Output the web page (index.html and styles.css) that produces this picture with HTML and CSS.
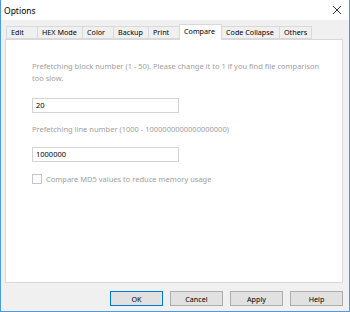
FILE: index.html
```html
<!DOCTYPE html>
<html lang="en">
<head>
    <meta charset="UTF-8">
    <title>Options</title>
    <link rel="stylesheet" href="styles.css">
</head>
<body>
<div class="window">
    <div class="titlebar">
        <span class="title">Options</span>
        <svg class="close" width="10" height="10" viewBox="0 0 10 10"><path d="M1 1L9 9M9 1L1 9" stroke="#333" stroke-width="1"/></svg>
    </div>

    <div class="client">
        <div class="tabs">
            <div class="tab w-edit">Edit</div>
            <div class="tab w-hex">HEX Mode</div>
            <div class="tab w-color">Color</div>
            <div class="tab w-backup">Backup</div>
            <div class="tab w-print">Print</div>
            <div class="tab w-compare active">Compare</div>
            <div class="tab w-collapse">Code Collapse</div>
            <div class="tab w-others">Others</div>
        </div>

        <div class="panel">
            <p class="label">Prefetching block number (1 - 50). Please change it to 1 if you find file comparison too slow.</p>
            <div class="field first">20</div>
            <p class="label">Prefetching line number (1000 - 1000000000000000000)</p>
            <div class="field second">1000000</div>
            <div class="check-row">
                <span class="checkbox"></span>
                <span class="label">Compare MD5 values to reduce memory usage</span>
            </div>
        </div>

        <div class="buttons">
            <button class="btn default">OK</button>
            <button class="btn">Cancel</button>
            <button class="btn">Apply</button>
            <button class="btn">Help</button>
        </div>
    </div>
</div>
</body>
</html>
```

FILE: styles.css
```css
/* Windows-Dialog im Kleinformat */
body { margin: 0; background: #ffffff; font-family: "Noto Sans", "DejaVu Sans", sans-serif; }
.window {
    width: 350px;
    height: 312px;
    box-sizing: border-box;
    border: 1px solid #4a9be2;
    border-top: none;
    background: #f0f0f0;
    display: flex;
    flex-direction: column;
}
.titlebar { height: 20px; background: #ffffff; display: flex; align-items: center; justify-content: space-between; padding: 0 7px 0 3px; }
.title { font-size: 8.5px; color: #000; }
.close { display: block; }

.client { flex: 1; display: flex; flex-direction: column; padding: 4px 6px 0 4px; }

/* Registerkarten */
.tabs { display: flex; align-items: flex-end; height: 15px; padding-left: 1px; position: relative; z-index: 1; }
.tab {
    box-sizing: border-box;
    height: 13px;
    border: 1px solid #d9d9d9;
    border-right: none;
    background: #f0f0f0;
    font-size: 7.2px;
    color: #000;
    padding-left: 4px;
    line-height: 11px;
}
.tab.active { height: 16px; background: #ffffff; border-bottom: none; border-right: 1px solid #d9d9d9; margin-bottom: -1px; line-height: 13px; }
.tab.w-edit { width: 31px; }
.tab.w-hex { width: 45px; }
.tab.w-color { width: 31px; }
.tab.w-backup { width: 35px; }
.tab.w-print { width: 31px; }
.tab.w-compare { width: 43px; }
.tab.w-collapse { width: 57px; border-left: none; }
.tab.w-others { width: 33px; border-right: 1px solid #d9d9d9; }

.panel {
    height: 244px;
    box-sizing: border-box;
    border: 1px solid #d9d9d9;
    background: #ffffff;
    padding: 20px 16px 0 26px;
}
.label { margin: 0; font-size: 7.5px; line-height: 12px; color: #a0a0a0; }
.field {
    width: 147px;
    height: 15px;
    box-sizing: border-box;
    border: 1px solid #d4d4d4;
    font-size: 7.5px;
    line-height: 13px;
    padding-left: 3px;
    color: #000;
}
.field.first { margin: 14px 0 10px; }
.field.second { margin: 12px 0 11px; }
.check-row { display: flex; align-items: center; gap: 4px; height: 12px; }
.checkbox { width: 8px; height: 8px; border: 1px solid #c4c4c4; background: #fff; }

/* Schaltflächen */
.buttons { display: flex; justify-content: flex-end; gap: 7px; margin-top: 8px; }
.btn {
    width: 53px;
    height: 15px;
    box-sizing: border-box;
    border: 1px solid #adadad;
    background: #e1e1e1;
    font-family: inherit;
    font-size: 7.2px;
    padding: 0;
    color: #000;
}
.btn.default { border-color: #0078d7; }
```
